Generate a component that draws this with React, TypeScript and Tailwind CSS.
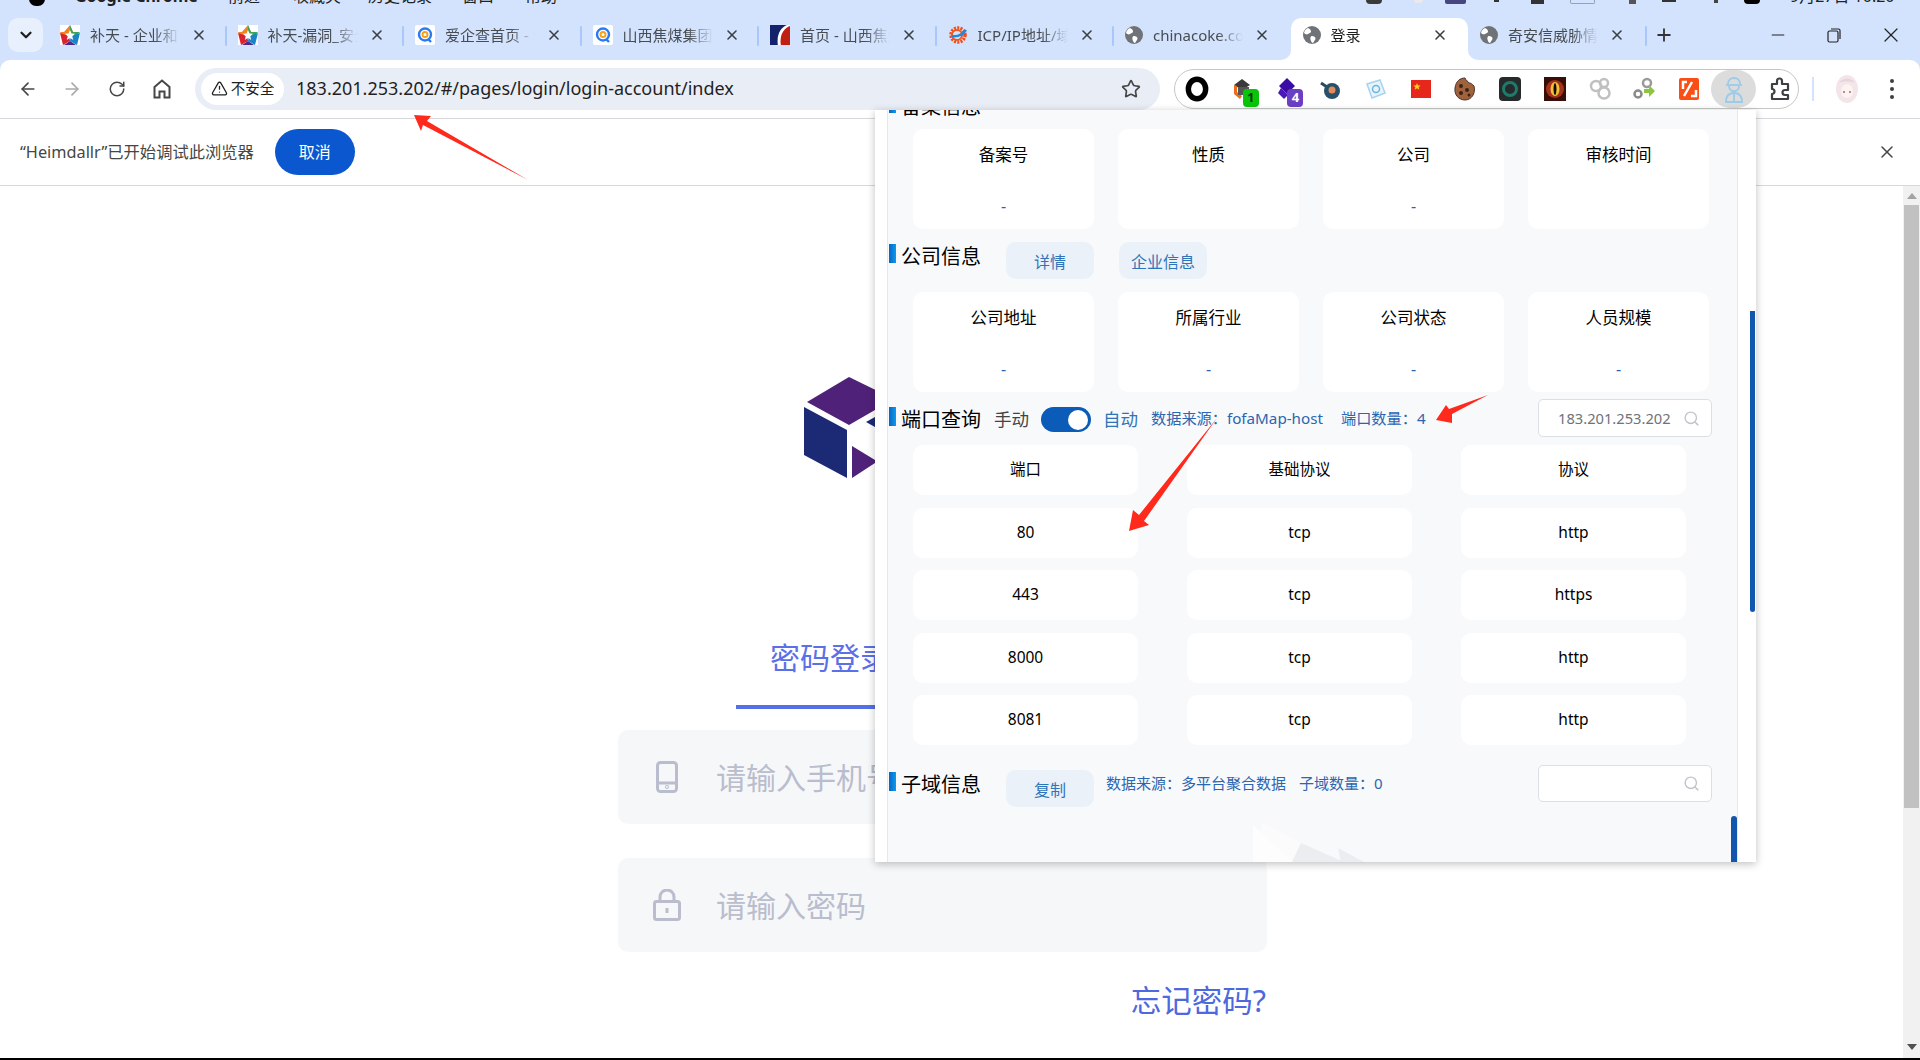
import React from "react";
import { ArrowLeft, ArrowRight, RotateCw, Star, X, Plus, Minus, Search, TriangleAlert, ChevronDown } from "lucide-react";

const Globe = () => (
  <svg width="18" height="18" viewBox="0 0 18 18" className="shrink-0">
    <circle cx="9" cy="9" r="9" fill="#6f7377" />
    <path d="M5 2c2 1 3 2 3 3.500S6 7 5 8 2 8 1 7c.5-2.500 2-4 4-5zM9 10c2 0 3.500 1 3.500 2.500S11 15 10 17c-1.500 0-2-2-2.500-3.500S7.500 10 9 10z" fill="#fff" />
  </svg>
);
const StarIcon = () => (
  <svg width="20" height="20" viewBox="0 0 20 20" className="shrink-0">
    <rect width="20" height="20" fill="#fff" />
    <path d="M10 0 4 7H0l4 6 6-3 3-3z" fill="#f58220" />
    <path d="M10 0l3 7h7l-5 5-5-2z" fill="#3aa655" />
    <path d="M0 8l3 12 7-4-1-5z" fill="#d9232e" />
    <path d="M20 8l-3 12-7-4 1-5z" fill="#1b84c8" />
    <path d="M4 20l6-4 6 4z" fill="#4a2a8c" />
    <path d="M10 5l1.500 3.500 3.500.3-2.700 2.400.9 3.800L10 12.800 6.800 15l.9-3.800L5 8.800l3.500-.3z" fill="#fff" />
  </svg>
);
const QIcon = () => (
  <svg width="20" height="20" viewBox="0 0 20 20" className="shrink-0">
    <rect width="20" height="20" rx="2" fill="#fff" />
    <circle cx="10" cy="9.500" r="6" fill="none" stroke="#2a7bf0" strokeWidth="2.400" />
    <circle cx="10" cy="9.500" r="2.500" fill="none" stroke="#f7a21b" strokeWidth="2" />
    <path d="M13 14l3 3" stroke="#2a7bf0" strokeWidth="2.400" />
  </svg>
);
const CokeIcon = () => (
  <svg width="20" height="20" viewBox="0 0 20 20" className="shrink-0">
    <rect width="20" height="24" y="-2" fill="#14226b" />
    <path d="M20-1C11 1 6 9 8 21h12z" fill="#fff" />
    <path d="M20 1C14 3 9 10 11 21h9z" fill="#c01f14" />
  </svg>
);
const IcpIcon = () => (
  <svg width="20" height="20" viewBox="0 0 20 20" className="shrink-0">
    <circle cx="10" cy="10" r="7" fill="none" stroke="#ef4b1d" strokeWidth="3.500" strokeDasharray="2 1.200" />
    <circle cx="9" cy="10" r="5" fill="none" stroke="#f0581f" strokeWidth="2" />
    <path d="M4 11c5 1 10-1 14-6" stroke="#2388d8" strokeWidth="2.400" fill="none" />
  </svg>
);

const tabs: { icon: React.ReactNode; title: string; active?: boolean }[] = [
  { icon: <StarIcon />, title: "补天 - 企业和白帽子" },
  { icon: <StarIcon />, title: "补天-漏洞_安全漏洞" },
  { icon: <QIcon />, title: "爱企查首页 - 企业查询" },
  { icon: <QIcon />, title: "山西焦煤集团有限责任" },
  { icon: <CokeIcon />, title: "首页 - 山西焦煤集团" },
  { icon: <IcpIcon />, title: "ICP/IP地址/域名信息" },
  { icon: <Globe />, title: "chinacoke.com.cn" },
  { icon: <Globe />, title: "登录", active: true },
  { icon: <Globe />, title: "奇安信威胁情报中心" },
];

function Tab({ icon, title, active, sep }: { icon: React.ReactNode; title: string; active?: boolean; sep: boolean }) {
  return (
    <div className={`relative flex h-[42px] w-[177.5px] shrink-0 items-start rounded-t-[10px] px-[12px] ${active ? "bg-white" : ""}`}>
      {active && (
        <>
          <span className="absolute bottom-0 left-[-10px] h-[10px] w-[10px] bg-white">
            <span className="block h-full w-full rounded-br-[10px] bg-[#d3e3fd]" />
          </span>
          <span className="absolute bottom-0 right-[-10px] h-[10px] w-[10px] bg-white">
            <span className="block h-full w-full rounded-bl-[10px] bg-[#d3e3fd]" />
          </span>
        </>
      )}
      <div className="flex h-[34px] w-full items-center">
        {icon}
        <span
          className={`ml-[10px] w-[90px] overflow-hidden whitespace-nowrap text-[15px] [mask-image:linear-gradient(to_right,black_72%,transparent)] ${active ? "text-[#1f1f1f]" : "text-[#474c52]"}`}
        >
          {title}
        </span>
        <X size={16} strokeWidth={2.4} className="ml-[11px] shrink-0 text-[#3c4043]" />
      </div>
      {sep && <span className="absolute right-[-1px] top-[8px] h-[20px] w-[2px] rounded-full bg-[#a8c7fa]" />}
    </div>
  );
}

const extIcons: React.ReactNode[] = [
  <svg width="26" height="26" viewBox="0 0 24 24"><ellipse cx="12" cy="12" rx="8" ry="9" fill="none" stroke="#000" strokeWidth="5" /></svg>,
  <svg width="24" height="24" viewBox="0 0 24 24"><path d="M4 8l8-6 8 6-8 5z" fill="#3a3a3a" /><path d="M4 8v9l6 5 2-3-5-4V9z" fill="#f26a1b" /><path d="M8 10h11v8H8z" fill="#555" /></svg>,
  <svg width="24" height="24" viewBox="0 0 24 24"><path d="M12 1l8 8-8 8-8-8z" fill="#3a0ca3" /><path d="M6 11l7 7-4 4-6-6z" fill="#4a17b8" /></svg>,
  <svg width="24" height="24" viewBox="0 0 24 24"><path d="M2 6l6 4" stroke="#244c63" strokeWidth="3" /><circle cx="13" cy="14" r="8" fill="#27506b" /><circle cx="13" cy="13" r="3.500" fill="#e58a5a" /></svg>,
  <svg width="24" height="24" viewBox="0 0 24 24"><path d="M3 7l13-4 5 13-13 5z" fill="#e8f4fb" stroke="#a6d3ee" strokeWidth="1.500" /><circle cx="12" cy="12" r="3.500" fill="none" stroke="#6db4e0" strokeWidth="1.500" /></svg>,
  <svg width="24" height="24" viewBox="0 0 24 24"><rect x="2" y="3" width="20" height="18" fill="#e5281b" /><path d="M8 6l1 2.500h2.600l-2 1.700.8 2.600L8 11.300l-2.400 1.500.8-2.600-2-1.700H7z" fill="#ffd21f" /></svg>,
  <svg width="24" height="24" viewBox="0 0 24 24"><path d="M12 1c1 3 3 3 4 5 2 0 3 1 5 3 2 8-3 14-9 14S1 18 2 11 7 1 12 1z" fill="#a0623c" stroke="#4b3023" /><circle cx="8" cy="9" r="2" fill="#3b2417" /><circle cx="14" cy="13" r="2" fill="#3b2417" /><circle cx="8" cy="16" r="2" fill="#3b2417" /><circle cx="16" cy="18" r="1.500" fill="#3b2417" /></svg>,
  <svg width="24" height="24" viewBox="0 0 24 24"><rect x="1" width="22" height="24" rx="4" fill="#262a2a" /><circle cx="12" cy="12" r="6.500" fill="none" stroke="#1d7b6a" strokeWidth="3" /></svg>,
  <svg width="24" height="24" viewBox="0 0 24 24"><rect x="1" width="22" height="24" fill="#3a0e08" /><circle cx="12" cy="12" r="9" fill="#a5321a" /><ellipse cx="12" cy="12" rx="4.500" ry="7" fill="#f0c23a" /><ellipse cx="12" cy="12" rx="1.500" ry="6" fill="#1b0a05" /></svg>,
  <svg width="24" height="24" viewBox="0 0 24 24" fill="none" stroke="#c0c0c0" strokeWidth="2.500"><circle cx="8" cy="9" r="5" /><circle cx="16" cy="6" r="4" /><circle cx="16" cy="16" r="5.500" /></svg>,
  <svg width="24" height="24" viewBox="0 0 24 24"><circle cx="6" cy="17" r="3.500" fill="none" stroke="#8a8a8a" strokeWidth="2.500" /><circle cx="15" cy="6" r="4" fill="none" stroke="#9a9a9a" strokeWidth="2.500" /><path d="M12 12h5V8l6 6-6 6v-4h-5z" fill="#8cc63f" /></svg>,
  <svg width="24" height="24" viewBox="0 0 24 24"><rect x="2" y="1" width="20" height="22" rx="2" fill="#fb4e14" /><path d="M10 5H6v7M7 19l8-14M14 19h5v-6" fill="none" stroke="#fff" strokeWidth="2.500" /></svg>,
  <svg width="24" height="28" viewBox="0 0 24 28" fill="none" stroke="#9bcbe9" strokeWidth="1.800"><path d="M6 9c0-8 12-8 12 0" /><path d="M4 10h16" /><path d="M7 11c0 7 10 7 10 0" /><path d="M4 27c0-7 3-9 8-9s8 2 8 9z" /><path d="M12 18v9" /></svg>,
  <svg width="24" height="24" viewBox="0 0 24 24" fill="none" stroke="#3c4043" strokeWidth="2.200" strokeLinejoin="round"><path d="M4 7h5V4a2 2 0 0 1 5 0v3h6v6h-3a2 2 0 0 0 0 5h3v4H4v-5a2 2 0 0 0 0-5z" /></svg>,
];

function Extensions() {
  return (
    <div className="ml-[14px] flex h-[40px] w-[625px] shrink-0 items-center rounded-full border border-[#c4c7c5] bg-white">
      {extIcons.map((icon, i) => (
        <div key={i} className={`relative flex h-[38px] w-[44.700px] shrink-0 items-center justify-center ${i === 12 ? "rounded-full bg-[#dcdcdc]" : ""} ${i === 13 ? "ml-[2px]" : ""}`}>
          {icon}
          {i === 1 && <span className="absolute left-[23px] top-[19px] flex h-[18px] w-[16px] items-center justify-center rounded-[4px] bg-[#0ac40a] text-[13px] font-bold text-[#103810]">1</span>}
          {i === 2 && <span className="absolute left-[23px] top-[19px] flex h-[18px] w-[16px] items-center justify-center rounded-[4px] bg-[#6b3fc4] text-[13px] font-bold text-white">4</span>}
        </div>
      ))}
    </div>
  );
}

function Card({ label, value }: { label: string; value?: string }) {
  return (
    <div className="flex h-[100px] flex-col items-center rounded-[10px] bg-white pt-[14px]">
      <span className="h-[24px] text-[16.500px] leading-[24px] text-black">{label}</span>
      <span className="mt-[27px] h-[24px] text-[16px] leading-[24px] text-[#2563b0]">{value}</span>
    </div>
  );
}

function Cell({ text }: { text: string }) {
  return <div className="flex h-[50px] items-center justify-center rounded-[10px] bg-white text-[15.500px] text-black">{text}</div>;
}

function SectionTitle({ text }: { text: string }) {
  return (
    <div className="ml-[1px] flex shrink-0 items-start">
      <span className="mt-[2px] h-[19px] w-[7px] bg-gradient-to-r from-[#0a66c2] to-[#0a9cf0]" />
      <span className="ml-[5px] w-[81px] text-[20px] leading-[30px] text-black">{text}</span>
    </div>
  );
}

function SoftButton({ text, className }: { text: string; className: string }) {
  return (
    <div className={`flex h-[37px] shrink-0 items-center justify-center rounded-[10px] bg-[#eaf1f8] pt-[3px] text-[16px] text-[#2f74b8] ${className}`}>
      {text}
    </div>
  );
}

function SearchBox({ value, className }: { value?: string; className: string }) {
  return (
    <div className={`ml-auto mr-[25px] flex w-[174px] shrink-0 items-center rounded-[5px] border border-[#dcdfe6] bg-white pl-[19px] pr-[11px] text-[14.700px] text-[#6f7378] ${className}`}>
      <span className="whitespace-nowrap">{value}</span>
      <Search size={17} className="ml-auto shrink-0 text-[#c0c4cc]" />
    </div>
  );
}

function Popup() {
  const ports = [
    ["端口", "基础协议", "协议"],
    ["80", "tcp", "http"],
    ["443", "tcp", "https"],
    ["8000", "tcp", "http"],
    ["8081", "tcp", "http"],
  ];
  return (
    <div className="absolute left-[875px] top-[110px] z-20 flex h-[752px] w-[881px] overflow-hidden bg-white shadow-[0_2px_8px_rgba(0,0,0,0.25)]">
      <div className="w-[13px] shrink-0 border-r border-[#e8e8e8] bg-white" />
      <div className="relative flex w-[850px] shrink-0 flex-col overflow-hidden border-r border-[#e8e8e8] bg-[#f8f9fb]">
        <svg width="130" height="40" viewBox="0 0 130 40" className="absolute bottom-0 left-[365px]">
          <path d="M0 3l40 37H0z" fill="#fdfdfe" />
          <path d="M8 0l40 21 43 19H39L8 10z" fill="#fbfbfc" />
          <path d="M39 40 48 21 91 40z" fill="#ebedf1" />
          <path d="M85 26 111 40H88z" fill="#ebedf1" />
        </svg>
        <div className="relative mt-[-18px] flex h-[37px] shrink-0">
          <SectionTitle text="备案信息" />
        </div>
        <div className="relative ml-[25px] grid grid-cols-[repeat(4,181px)] gap-x-[24px]">
          <Card label="备案号" value="-" />
          <Card label="性质" />
          <Card label="公司" value="-" />
          <Card label="审核时间" />
        </div>
        <div className="relative mb-[13px] mt-[13px] flex h-[37px] shrink-0">
          <SectionTitle text="公司信息" />
          <SoftButton text="详情" className="ml-[24px] w-[88px]" />
          <SoftButton text="企业信息" className="ml-[25px] w-[88px]" />
        </div>
        <div className="relative ml-[25px] grid grid-cols-[repeat(4,181px)] gap-x-[24px]">
          <Card label="公司地址" value="-" />
          <Card label="所属行业" value="-" />
          <Card label="公司状态" value="-" />
          <Card label="人员规模" value="-" />
        </div>
        <div className="relative mt-[13px] flex h-[40px] shrink-0 items-start">
          <SectionTitle text="端口查询" />
          <span className="ml-[12px] mt-[2px] text-[17.500px] leading-[24px] text-[#444]">手动</span>
          <span className="ml-[12px] mt-[2px] flex h-[25px] w-[50px] items-center justify-end rounded-full bg-[#0a5cb8] pr-[3px]">
            <span className="h-[20px] w-[20px] rounded-full bg-white" />
          </span>
          <span className="ml-[12px] mt-[2px] text-[17.500px] leading-[24px] text-[#2f74b8]">自动</span>
          <span className="ml-[13px] mt-[2px] whitespace-nowrap text-[15.200px] leading-[22px] text-[#2b66b1]">数据来源：fofaMap-host</span>
          <span className="ml-[18px] mt-[2px] whitespace-nowrap text-[15.200px] leading-[22px] text-[#2b66b1]">端口数量：4</span>
          <SearchBox value="183.201.253.202" className="mt-[-6px] h-[38px]" />
        </div>
        <div className="relative ml-[25px] grid grid-cols-[repeat(3,225px)] gap-x-[49px] gap-y-[12.500px]">
          {ports.flat().map((t, i) => (
            <Cell key={i} text={t} />
          ))}
        </div>
        <div className="relative mt-[25px] flex h-[37px] shrink-0 items-start">
          <SectionTitle text="子域信息" />
          <SoftButton text="复制" className="ml-[24px] w-[88px]" />
          <span className="ml-[12px] mt-[2px] whitespace-nowrap text-[15px] leading-[22px] text-[#2b66b1]">数据来源：多平台聚合数据</span>
          <span className="ml-[13px] mt-[2px] whitespace-nowrap text-[15px] leading-[22px] text-[#2b66b1]">子域数量：0</span>
          <SearchBox className="mt-[-5px] h-[37px]" />
        </div>
        <span className="absolute bottom-0 right-0 h-[46px] w-[6px] rounded-t-[3px] bg-[#1256ad]" />
      </div>
      <div className="relative flex-1 bg-white">
        <span className="absolute left-[12px] top-[201px] h-[301px] w-[5px] rounded-b-[3px] bg-[#1256ad]" />
      </div>
    </div>
  );
}

function Annotations() {
  return (
    <svg width="1920" height="1060" viewBox="0 0 1920 1060" className="pointer-events-none absolute left-0 top-0 z-30">
      <polygon points="414,115 431,116 427,121 528,180 423,125 421,131" fill="#ff2a1c" />
      <polygon points="1436,420 1446,405 1449,409 1488,395 1452,414 1452,423" fill="#ff2a1c" />
      <polygon points="1129,531 1133,510 1139,515 1217,418 1144,521 1149,525" fill="#ff2a1c" />
    </svg>
  );
}

function Login() {
  return (
    <div className="ml-[618px] w-[649px] pt-[191px]">
      <svg width="90" height="101" viewBox="0 0 90 101" className="ml-[186px] block">
        <polygon points="45,0 3,25 45,48 90,22" fill="#4f2178" />
        <polygon points="0,30 43,53 43,101 0,78" fill="#1c2a75" />
        <polygon points="48,69 71,83 71,86 48,101" fill="#4f2178" />
        <polygon points="62,45 71,40 71,50" fill="#1c2a75" />
      </svg>
      <div className="ml-[118px] mt-[160px] w-[230px] border-b-[4px] border-[#5470e6] pb-[27px] pl-[34px] text-[30px] leading-[40px] text-[#5b6fe8]">
        密码登录
      </div>
      <div className="mt-[21px] flex h-[94px] items-center rounded-[10px] bg-[#f6f7f9] pl-[38px]">
        <svg width="22" height="32" viewBox="0 0 22 32" fill="none" stroke="#b9bdcd" strokeWidth="3">
          <rect x="1.500" y="1.500" width="19" height="29" rx="3" />
          <path d="M2 22h18" />
          <circle cx="11" cy="26" r="0.500" />
        </svg>
        <span className="ml-[38px] text-[30px] text-[#b9bdcd]">请输入手机号</span>
      </div>
      <div className="mt-[34px] flex h-[94px] items-center rounded-[10px] bg-[#f6f7f9] pl-[35px]">
        <svg width="28" height="32" viewBox="0 0 28 32" fill="none" stroke="#b9bdcd" strokeWidth="3">
          <rect x="1.500" y="12.500" width="25" height="18" rx="2" />
          <path d="M7 12V8a7 7 0 0 1 14 0v4" />
          <path d="M14 19v5" />
        </svg>
        <span className="ml-[35px] text-[30px] text-[#b9bdcd]">请输入密码</span>
      </div>
      <div className="mt-[28px] pr-[1px] text-right text-[30.500px] leading-[40px] text-[#4e68dd]">忘记密码?</div>
    </div>
  );
}

export default function App() {
  return (
    <div className="relative flex h-[1060px] w-[1920px] flex-col overflow-hidden bg-[#d3e3fd] font-['Noto_Sans','Noto_Sans_CJK_SC',sans-serif]">
      <div className="flex h-[18px] shrink-0 items-start overflow-hidden text-[#222]">
        <div className="ml-[29px] mt-[-8px] h-[14px] w-[16px] rounded-full bg-black" />
        <div className="ml-[30px] mt-[-15px] flex h-[22px] items-center text-[16px] leading-[22px]">
          <span className="w-[153px] font-bold">Google Chrome</span>
          <span className="w-[65px]">前进</span>
          <span className="w-[75px]">收藏夹</span>
          <span className="w-[94px]">历史记录</span>
          <span className="w-[63px]">窗口</span>
          <span>帮助</span>
        </div>
        <div className="ml-auto mr-[28px] flex items-start">
          <span className="h-[4px] w-[16px] rounded-b-full bg-[#3a3a3a]" />
          <span className="ml-[32px] h-[3px] w-[9px] rounded-b-full bg-[#e9e9ee]" />
          <span className="ml-[22px] h-[4px] w-[21px] rounded-b-[2px] bg-[#45477e]" />
          <span className="ml-[28px] h-[2px] w-[5px] bg-[#333]" />
          <span className="ml-[32px] h-[4px] w-[13px] bg-[#333]" />
          <span className="ml-[26px] h-[4px] w-[25px] rounded-b-[2px] border border-t-0 border-[#9aa0ad]" />
          <span className="ml-[34px] h-[4px] w-[7px] bg-[#555]" />
          <span className="ml-[26px] h-[2px] w-[14px] bg-[#333]" />
          <span className="ml-[38px] h-[3px] w-[4px] bg-[#444]" />
          <span className="ml-[26px] h-[4px] w-[16px] rounded-b-full bg-black" />
          <span className="ml-[30px] mt-[-15px] w-[102px] whitespace-nowrap text-[16px] leading-[22px]">9月27日 10:20</span>
        </div>
      </div>

      <div className="flex h-[42px] shrink-0 items-start">
        <div className="ml-[8px] mr-[5px] flex h-[34px] w-[35px] shrink-0 items-center justify-center rounded-[10px] bg-[#e9f0fd]">
          <ChevronDown size={18} strokeWidth={3} className="text-[#1f1f1f]" />
        </div>
        {tabs.map((t, i) => (
          <Tab key={i} icon={t.icon} title={t.title} active={t.active} sep={i !== 6 && i !== 7} />
        ))}
        <div className="ml-[8px] flex h-[34px] w-[20px] items-center justify-center">
          <Plus size={20} strokeWidth={2.2} className="text-[#333]" />
        </div>
        <div className="ml-auto flex h-[34px] items-center text-[#222]">
          <Minus size={20} strokeWidth={1.3} />
          <svg width="18" height="18" viewBox="0 0 18 18" fill="none" stroke="#222" strokeWidth="1.200" className="ml-[37px]">
            <rect x="3" y="5" width="10" height="11" rx="1.500" />
            <path d="M6 3h7.500A1.500 1.500 0 0 1 15 4.500V13" />
          </svg>
          <X size={24} strokeWidth={1.2} className="ml-[36px] mr-[17px]" />
        </div>
      </div>

      <div className="flex h-[59px] shrink-0 items-center rounded-t-[10px] border-b border-[#dadce0] bg-white pb-[1px]">
        <ArrowLeft size={20} strokeWidth={2} className="ml-[18px] text-[#474747]" />
        <ArrowRight size={20} strokeWidth={2} className="ml-[24px] text-[#a9a9a9]" />
        <RotateCw size={18} strokeWidth={2} className="ml-[26px] text-[#474747]" />
        <svg width="18" height="20" viewBox="0 0 18 20" fill="none" stroke="#474747" strokeWidth="2" className="ml-[27px] shrink-0">
          <path d="M1.500 8 9 1.500 16.500 8v10.500h-5v-6h-5v6h-5z" />
        </svg>
        <div className="ml-[24px] flex h-[42px] w-[965px] shrink-0 items-center rounded-full bg-[#e9edf6] pl-[6px]">
          <div className="flex h-[32px] w-[83px] shrink-0 items-center justify-center gap-[3px] rounded-full bg-white text-[14.500px] text-[#1f1f1f]">
            <TriangleAlert size={17} strokeWidth={1.8} />
            <span>不安全</span>
          </div>
          <span className="ml-[12px] whitespace-nowrap text-[18px] text-[#1f1f1f]">183.201.253.202/#/pages/login/login-account/index</span>
          <Star size={20} strokeWidth={2} className="ml-auto mr-[19px] text-[#474747]" />
        </div>
        <Extensions />
        <span className="ml-[13px] h-[24px] w-[2px] bg-[#d3e3fd]" />
        <svg width="26" height="30" viewBox="0 0 26 30" className="ml-[20px]">
          <ellipse cx="13" cy="15" rx="11" ry="14" fill="#f4e6e8" />
          <ellipse cx="13" cy="17" rx="6" ry="7" fill="#fdf3f1" />
          <path d="M5 9c3-6 13-6 16 0-4-2-12-2-16 0z" fill="#e4d6dc" />
          <circle cx="10" cy="18" r="1" fill="#a06a7a" />
          <circle cx="16" cy="18" r="1" fill="#a06a7a" />
        </svg>
        <svg width="6" height="22" viewBox="0 0 6 22" fill="#3c4043" className="ml-[29px]">
          <circle cx="3" cy="3" r="2" />
          <circle cx="3" cy="11" r="2" />
          <circle cx="3" cy="19" r="2" />
        </svg>
      </div>

      <div className="flex h-[67px] shrink-0 items-center border-b border-[#d8d8d8] bg-white shadow-[0_3px_5px_rgba(0,0,0,0.16)]">
        <span className="ml-[20px] text-[16.300px] text-[#444746]">“Heimdallr”已开始调试此浏览器</span>
        <div className="ml-[21px] flex h-[46px] w-[80px] items-center justify-center rounded-full bg-[#0b57d0] text-[16px] text-white">取消</div>
        <X size={20} strokeWidth={1.8} className="ml-auto mr-[23px] text-[#444746]" />
      </div>

      <div className="flex min-h-0 flex-1 bg-white">
        <div className="min-w-0 flex-1">
          <Login />
        </div>
        <div className="flex w-[17px] shrink-0 flex-col items-center bg-[#f1f1f1]">
          <svg width="10" height="6" viewBox="0 0 10 6" className="mt-[7px] shrink-0">
            <path d="M5 0l5 6H0z" fill="#a3a3a3" />
          </svg>
          <div className="mt-[6px] h-[603px] w-[15px] shrink-0 bg-[#c1c1c1]" />
          <svg width="10" height="6" viewBox="0 0 10 6" className="mb-[8px] mt-auto shrink-0">
            <path d="M0 0h10L5 6z" fill="#505050" />
          </svg>
        </div>
      </div>
      <div className="h-[2px] shrink-0 bg-black" />

      <Popup />
      <Annotations />
    </div>
  );
}
